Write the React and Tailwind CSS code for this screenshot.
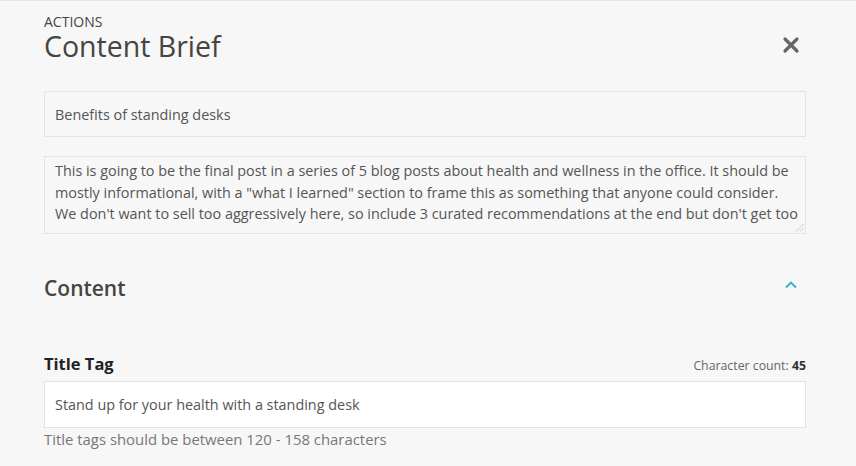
import React, { useState } from "react";

const brief =
  "This is going to be the final post in a series of 5 blog posts about health and wellness in the office. It should be mostly informational, with a \"what I learned\" section to frame this as something that anyone could consider. We don't want to sell too aggressively here, so include 3 curated recommendations at the end but don't get too salesy about it.";

export default function App() {
  const [topic, setTopic] = useState("Benefits of standing desks");
  const [notes, setNotes] = useState(brief);
  const [title, setTitle] = useState("Stand up for your health with a standing desk");

  return (
    <div
      className="min-h-[466px] bg-[#f7f7f7] border-t border-[#e6e6e6] text-[#444]"
      style={{ fontFamily: '"Open Sans", "Liberation Sans", sans-serif' }}
    >
      <div className="pl-[44px] pr-[50px] pt-[12px]">
        {/* header */}
        <div className="flex items-start justify-between">
          <div>
            <div className="text-[14px] leading-[18px] uppercase text-[#444]">Actions</div>
            <h1 className="text-[28.5px] leading-[30px] font-medium text-[#444]">Content Brief</h1>
          </div>
          <button className="mt-[23px] mr-[6px] text-[#666]">
            <svg width="18" height="18" viewBox="0 0 18 18" fill="none" stroke="currentColor" strokeWidth="3.2" strokeLinecap="round">
              <path d="M3 3 L15 15 M15 3 L3 15" />
            </svg>
          </button>
        </div>

        {/* brief fields */}
        <input
          className="mt-[30px] block w-full h-[46px] px-[10px] bg-[#f7f7f7] border border-[#e3e3e3] text-[14.4px] text-[#555] outline-none"
          value={topic}
          onChange={(e) => setTopic(e.target.value)}
        />
        <div className="relative mt-[19px] h-[78px] pl-[10px] pr-[4px] pt-[3px] bg-[#f7f7f7] border border-[#e3e3e3]">
          <textarea
            className="block w-full h-[65px] bg-transparent text-[14.4px] leading-[21.5px] text-[#555] outline-none resize-none overflow-hidden"
            value={notes}
            onChange={(e) => setNotes(e.target.value)}
          />
          <svg className="absolute right-[1px] bottom-[1px]" width="9" height="9" viewBox="0 0 9 9" stroke="#c8c8c8" strokeWidth="1">
            <path d="M8.5 1 L1 8.5 M8.5 5 L5 8.5" />
          </svg>
        </div>

        {/* content section */}
        <div className="mt-[40px] flex items-center justify-between">
          <h2 className="text-[21px] leading-[28px] font-semibold text-[#444]">Content</h2>
          <button className="mr-[8px] -mt-[6px] text-[#2bb3c8]">
            <svg width="14" height="10" viewBox="0 0 14 10" fill="none" stroke="currentColor" strokeWidth="1.8">
              <path d="M2 7.5 L7 2.5 L12 7.5" />
            </svg>
          </button>
        </div>

        <div className="mt-[51px] flex items-end justify-between">
          <label className="text-[16.5px] leading-[22px] font-bold text-[#222]">Title Tag</label>
          <span className="text-[12.3px] leading-[18px] text-[#666]">
            Character count: <b className="font-bold text-[#333]">{title.length}</b>
          </span>
        </div>
        <input
          className="mt-[6px] block w-full h-[47px] px-[10px] bg-white border border-[#e3e3e3] text-[14.4px] text-[#555] outline-none"
          value={title}
          onChange={(e) => setTitle(e.target.value)}
        />
        <p className="mt-[1px] text-[14.9px] leading-[20px] text-[#777]">
          Title tags should be between 120 - 158 characters
        </p>
      </div>
    </div>
  );
}
